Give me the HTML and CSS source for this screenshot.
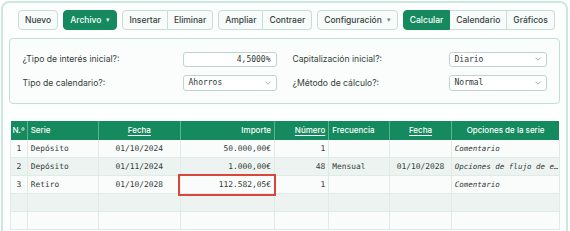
FILE: index.html
```html
<!DOCTYPE html>
<html lang="es">
<head>
<meta charset="utf-8">
<title>Calculadora de series</title>
<link rel="stylesheet" href="styles.css">
</head>
<body>
<div class="app">
  <div class="toolbar">
    <button class="btn">Nuevo</button>
    <button class="btn primary">Archivo <span class="caret">▾</span></button>
    <div class="group">
      <button class="btn">Insertar</button>
      <button class="btn">Eliminar</button>
    </div>
    <div class="group">
      <button class="btn">Ampliar</button>
      <button class="btn">Contraer</button>
    </div>
    <button class="btn">Configuración <span class="caret grey">▾</span></button>
    <div class="group">
      <button class="btn primary">Calcular</button>
      <button class="btn">Calendario</button>
      <button class="btn">Gráficos</button>
    </div>
  </div>

  <div class="panel">
    <div class="field">
      <span class="label">¿Tipo de interés inicial?:</span>
      <span class="input num">4,5000%</span>
    </div>
    <div class="field">
      <span class="label">Capitalización inicial?:</span>
      <span class="input select wide">Diario<svg class="chev" viewBox="0 0 6 4"><path d="M0.5 0.7 L3 3.2 L5.5 0.7" fill="none" stroke="#8a9a95" stroke-width="0.8"/></svg></span>
    </div>
    <div class="field">
      <span class="label">Tipo de calendario?:</span>
      <span class="input select">Ahorros<svg class="chev" viewBox="0 0 6 4"><path d="M0.5 0.7 L3 3.2 L5.5 0.7" fill="none" stroke="#8a9a95" stroke-width="0.8"/></svg></span>
    </div>
    <div class="field">
      <span class="label">¿Método de cálculo?:</span>
      <span class="input select wide">Normal<svg class="chev" viewBox="0 0 6 4"><path d="M0.5 0.7 L3 3.2 L5.5 0.7" fill="none" stroke="#8a9a95" stroke-width="0.8"/></svg></span>
    </div>
  </div>

  <table class="grid">
    <colgroup>
      <col class="c-n"><col class="c-serie"><col class="c-fecha"><col class="c-imp">
      <col class="c-num"><col class="c-frec"><col class="c-fecha2"><col class="c-opt">
    </colgroup>
    <thead>
      <tr>
        <th class="l">N.º</th>
        <th class="l">Serie</th>
        <th class="c"><u>Fecha</u></th>
        <th class="r">Importe</th>
        <th class="r"><u>Número</u></th>
        <th class="l">Frecuencia</th>
        <th class="c"><u>Fecha</u></th>
        <th class="c">Opciones de la serie</th>
      </tr>
    </thead>
    <tbody>
      <tr>
        <td class="n">1</td><td>Depósito</td><td class="c">01/10/2024</td><td class="r">50.000,00€</td>
        <td class="r">1</td><td></td><td class="c"></td><td class="i">Comentario</td>
      </tr>
      <tr class="alt">
        <td class="n">2</td><td>Depósito</td><td class="c">01/11/2024</td><td class="r">1.000,00€</td>
        <td class="r">48</td><td>Mensual</td><td class="c">01/10/2028</td><td class="i">Opciones de flujo de e…</td>
      </tr>
      <tr>
        <td class="n">3</td><td>Retiro</td><td class="c">01/10/2028</td><td class="r hl">112.582,05€</td>
        <td class="r">1</td><td></td><td class="c"></td><td class="i">Comentario</td>
      </tr>
      <tr class="alt">
        <td></td><td></td><td></td><td></td><td></td><td></td><td></td><td></td>
      </tr>
      <tr>
        <td></td><td></td><td></td><td></td><td></td><td></td><td></td><td></td>
      </tr>
    </tbody>
  </table>
</div>
</body>
</html>
```

FILE: styles.css
```css
* { box-sizing: border-box; }

html, body {
  margin: 0;
  padding: 0;
  background: #ffffff;
  overflow: hidden;
}

body {
  width: 570px;
  height: 231px;
  font-family: Inter, "Noto Sans", sans-serif;
  color: #2f3a36;
}

.app {
  margin: 1px 2px 0 1px;
  height: 240px;
  border: 2px solid #cbe9df;
  border-bottom: none;
  border-radius: 8px 8px 0 0;
  background: #fdfefe;
  padding: 7px 6px 0 6px;
}

/* toolbar */
.toolbar {
  display: flex;
  align-items: center;
  gap: 5px;
  padding-left: 9px;
  height: 20px;
}

.group {
  display: flex;
}

.btn {
  height: 20px;
  padding: 0 6px;
  font-family: Inter, "Noto Sans", sans-serif;
  font-size: 8.5px;
  font-weight: 500;
  color: #36433f;
  background: #f7fbfa;
  border: 1px solid #c9ddd6;
  border-radius: 4px;
  display: flex;
  align-items: center;
  gap: 5px;
  white-space: nowrap;
}

.btn.primary {
  background: #148a5e;
  border-color: #148a5e;
  color: #ffffff;
}

.group .btn { border-radius: 0; }
.group .btn + .btn { border-left: none; }
.group .btn:first-child { border-radius: 4px 0 0 4px; }
.group .btn:last-child { border-radius: 0 4px 4px 0; }

.caret {
  font-size: 6.5px;
  color: #d7efe6;
}
.caret.grey { color: #7a8a85; }

/* settings panel */
.panel {
  margin-top: 8px;
  border: 1px solid #bfe0d4;
  border-radius: 4px;
  background: #fbfdfc;
  padding: 12.5px 13px 12.5px 12.5px;
  display: grid;
  grid-template-columns: 254px 254px;
  column-gap: 16px;
  row-gap: 8px;
}

.field {
  display: flex;
  align-items: center;
  justify-content: space-between;
  height: 15.5px;
}

.label {
  font-size: 8.6px;
  color: #333d3a;
}

.input {
  width: 94px;
  height: 15.5px;
  border: 1px solid #bcd6cd;
  border-radius: 3px;
  background: #ffffff;
  font-family: "DejaVu Sans Mono", "Liberation Mono", monospace;
  font-size: 8px;
  color: #2f3a36;
  display: flex;
  align-items: center;
  padding: 0 5px;
}

.input.wide { width: 98px; }
.input.num { justify-content: flex-end; }
.input.select { justify-content: space-between; }

.chev {
  width: 6px;
  height: 4px;
}

/* table */
.grid {
  margin-top: 16.5px;
  margin-left: 1px;
  width: 549px;
  border-collapse: collapse;
  table-layout: fixed;
  font-family: "DejaVu Sans Mono", "Liberation Mono", monospace;
  font-size: 7.9px;
  color: #2f3a36;
}

.c-n { width: 16.7px; }
.c-serie { width: 71px; }
.c-fecha { width: 82.3px; }
.c-imp { width: 94px; }
.c-num { width: 54.3px; }
.c-frec { width: 61px; }
.c-fecha2 { width: 61.4px; }
.c-opt { width: 108.3px; }

.grid th {
  height: 19px;
  background: #148a5e;
  color: #ffffff;
  font-family: Inter, "Noto Sans", sans-serif;
  font-size: 8px;
  font-weight: 500;
  padding: 0 3px;
  border-left: 1px solid #5db290;
  white-space: nowrap;
  overflow: hidden;
}
.grid th:first-child { border-left: none; padding-left: 2px; }

.grid th u {
  text-decoration-thickness: 0.6px;
  text-underline-offset: 1.5px;
}

.grid td {
  height: 18px;
  padding: 0 3px;
  border: 1px solid #dfebe7;
  border-top: none;
  white-space: nowrap;
  overflow: hidden;
  background: #fafcfb;
}

.grid tr.alt td { background: #edf3f1; }

.l { text-align: left; }
.c { text-align: center; }
.r { text-align: right; }
.n { text-align: center; }
.grid td.i { font-style: italic; font-size: 7.5px; padding-left: 3px; padding-right: 1px; }

.grid td.hl {
  outline: 2px solid #d8473c;
  outline-offset: 0;
  overflow: visible;
}
```
